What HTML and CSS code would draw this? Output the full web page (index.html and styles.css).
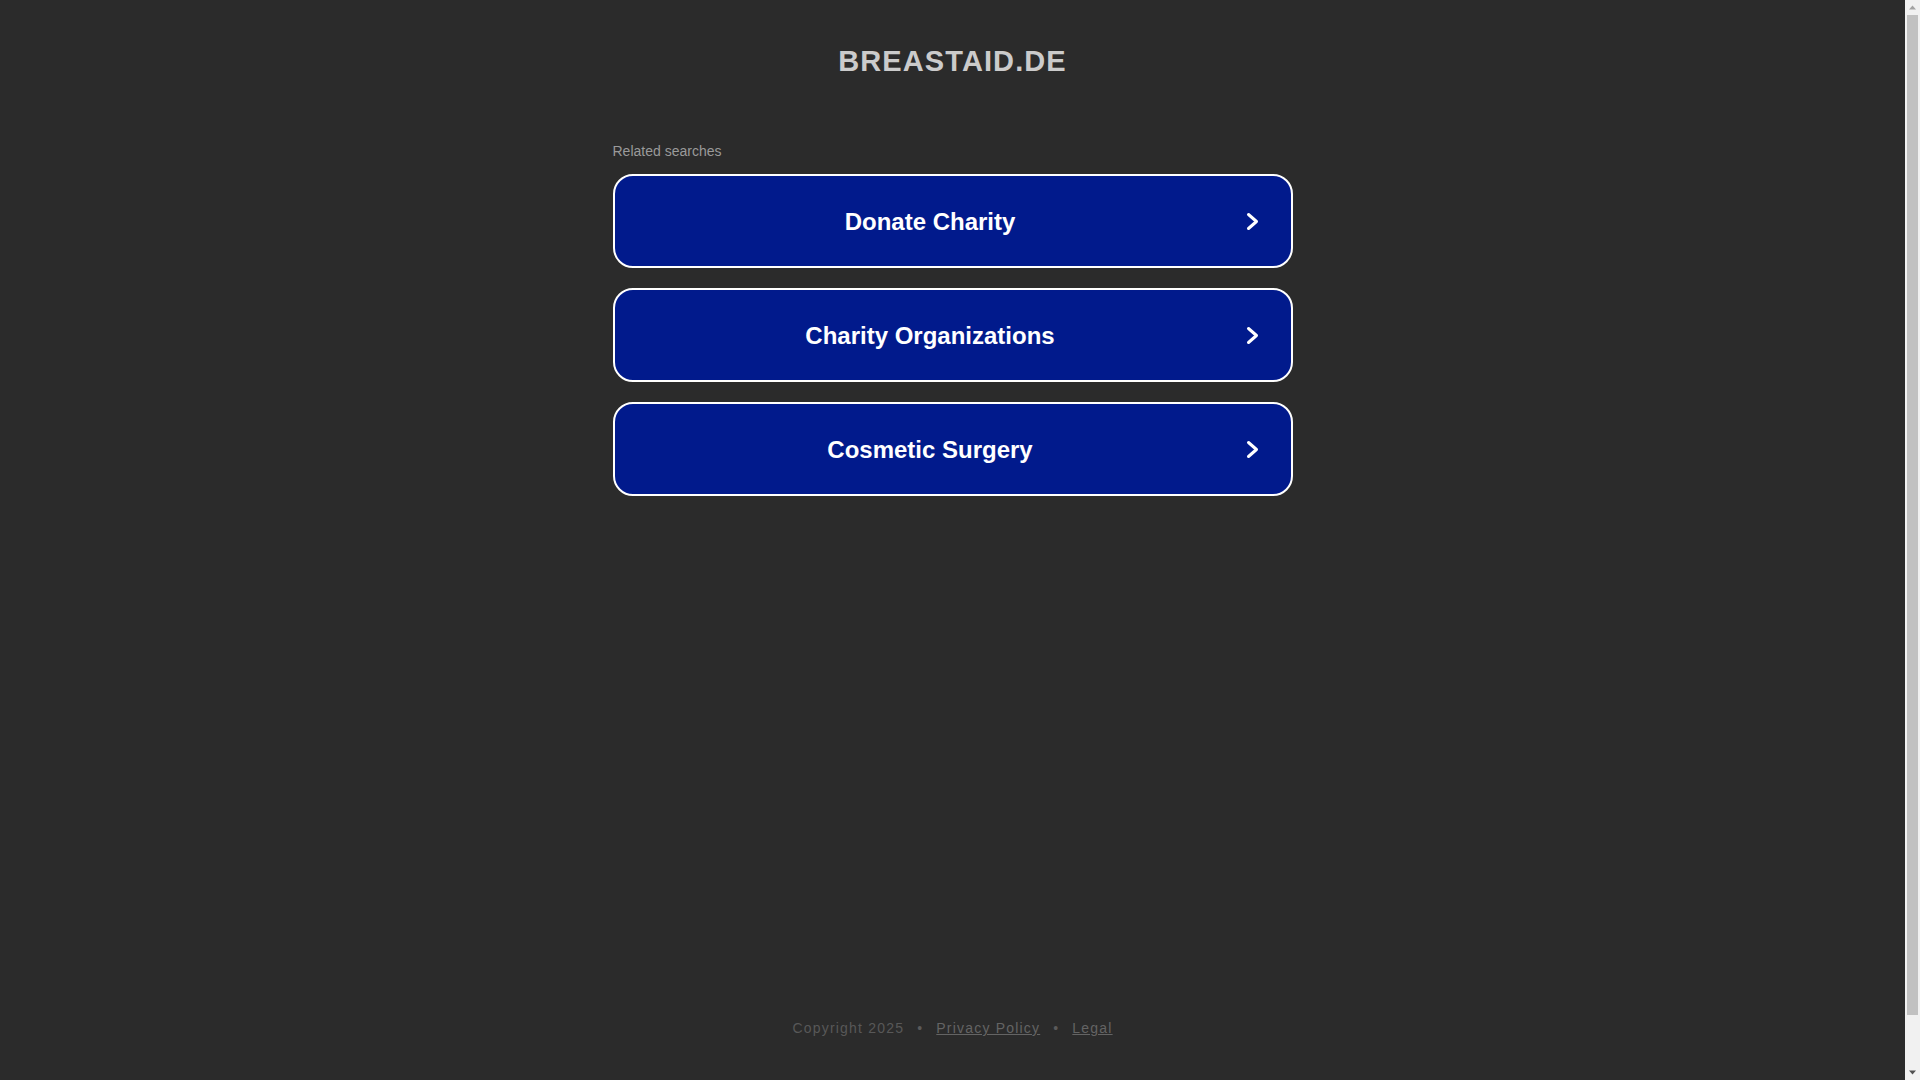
FILE: index.html
```html
<!DOCTYPE html>
<html lang="en">
<head>
<meta charset="utf-8">
<title>breastaid.de</title>
<link rel="stylesheet" href="styles.css">
</head>
<body>
<div class="page">
  <header class="header">
    <h1 class="title">BREASTAID.DE</h1>
  </header>
  <main class="main">
    <div class="related">Related searches</div>
    <div class="list">
      <a class="card" href="#">
        <span class="card-text">Donate Charity</span>
        <svg class="chev" width="13" height="19" viewBox="0 0 13 19"><polyline points="2.5,2.5 10.5,9.5 2.5,16.5" fill="none" stroke="#fff" stroke-width="3" stroke-linecap="round" stroke-linejoin="round"/></svg>
      </a>
      <a class="card" href="#">
        <span class="card-text">Charity Organizations</span>
        <svg class="chev" width="13" height="19" viewBox="0 0 13 19"><polyline points="2.5,2.5 10.5,9.5 2.5,16.5" fill="none" stroke="#fff" stroke-width="3" stroke-linecap="round" stroke-linejoin="round"/></svg>
      </a>
      <a class="card" href="#">
        <span class="card-text">Cosmetic Surgery</span>
        <svg class="chev" width="13" height="19" viewBox="0 0 13 19"><polyline points="2.5,2.5 10.5,9.5 2.5,16.5" fill="none" stroke="#fff" stroke-width="3" stroke-linecap="round" stroke-linejoin="round"/></svg>
      </a>
    </div>
  </main>
  <footer class="footer">
    <span class="copy">Copyright 2025</span>
    <span class="dot">•</span>
    <a class="flink" href="#">Privacy Policy</a>
    <span class="dot">•</span>
    <a class="flink" href="#">Legal</a>
  </footer>
</div>
<div class="scrollbar">
  <svg class="sb-arrow" width="15" height="15" viewBox="0 0 15 15"><polygon points="4,9.5 11,9.5 7.5,5.5" fill="#a3a3a3"/></svg>
  <div class="sb-track"><div class="sb-thumb"></div></div>
  <svg class="sb-arrow" width="15" height="15" viewBox="0 0 15 15"><polygon points="4,5.5 11,5.5 7.5,9.5" fill="#505050"/></svg>
</div>
</body>
</html>
```
FILE: styles.css
```css
html, body {
  margin: 0;
  padding: 0;
  overflow: hidden;
  height: 100%;
}
body {
  background: #2b2b2b;
  font-family: "Liberation Sans", Arial, sans-serif;
}
.page {
  display: flex;
  flex-direction: column;
  align-items: center;
  width: 1905px;
  height: 1134px;
  box-sizing: border-box;
}
.header {
  margin-top: 43px;
}
.title {
  margin: 0;
  font-size: 29px;
  line-height: 36px;
  font-weight: bold;
  letter-spacing: 1.1px;
  color: #cbcbcb;
}
.main {
  width: 680px;
  margin-top: 64px;
}
.related {
  font-size: 14px;
  line-height: 16px;
  color: #9a9a9a;
}
.list {
  margin-top: 15px;
  display: flex;
  flex-direction: column;
  gap: 20px;
}
.card {
  display: flex;
  align-items: center;
  height: 94px;
  box-sizing: border-box;
  border: 2px solid #ffffff;
  border-radius: 20px;
  background: #011a8c;
  text-decoration: none;
}
.card-text {
  flex: 1;
  text-align: center;
  font-size: 24px;
  font-weight: bold;
  color: #ffffff;
  padding-top: 2px;
}
.chev {
  display: block;
  margin-right: 32px;
  flex: none;
}
.footer {
  margin-top: auto;
  padding-bottom: 96px;
  display: flex;
  align-items: center;
  font-size: 14px;
  line-height: 20px;
  letter-spacing: 1.2px;
  color: #585858;
}
.dot {
  margin: 0 13px;
  color: #5a5a5a;
}
.flink {
  color: #646464;
  text-decoration: underline;
}
.scrollbar {
  position: fixed;
  top: 0;
  right: 0;
  width: 15px;
  height: 100%;
  background: #f1f1f1;
  display: flex;
  flex-direction: column;
}
.sb-arrow {
  display: block;
  flex: none;
}
.sb-track {
  flex: 1;
  padding: 0 2px 50px;
}
.sb-thumb {
  height: 100%;
  background: #c1c1c1;
}
```
